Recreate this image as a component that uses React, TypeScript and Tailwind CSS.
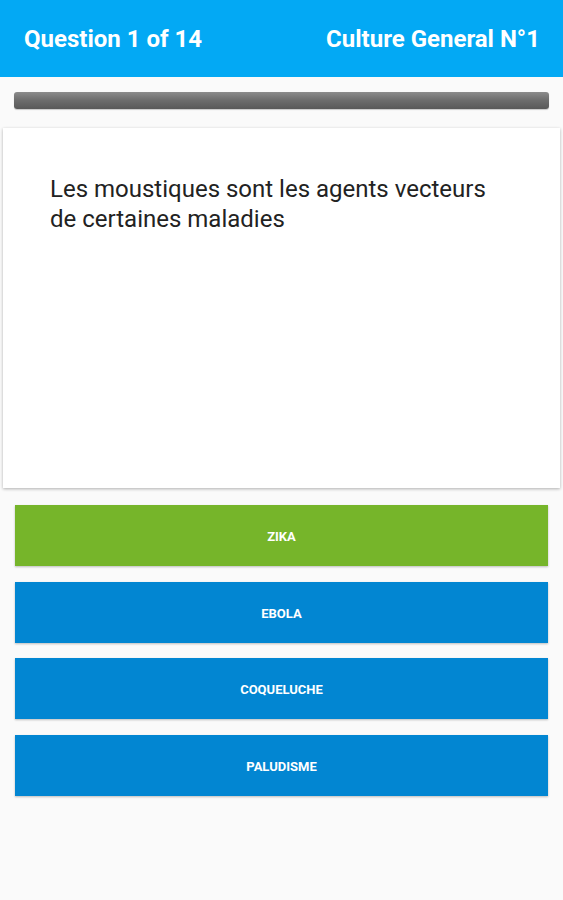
import React from 'react';

const answers = [
  { label: 'ZIKA', color: 'bg-[#76b52a]' },
  { label: 'EBOLA', color: 'bg-[#0286d2]' },
  { label: 'COQUELUCHE', color: 'bg-[#0286d2]' },
  { label: 'PALUDISME', color: 'bg-[#0286d2]' },
];

export default function App() {
  return (
    <div className="w-[563px] h-[900px] bg-[#fafafa] font-['Roboto',sans-serif] overflow-hidden">
      {/* Header */}
      <div className="h-[77px] bg-[#03a9f4] flex items-center justify-between pl-[24px] pr-[23px] text-white text-[24px] font-bold">
        <span>Question 1 of 14</span>
        <span>Culture General N°1</span>
      </div>

      {/* Progress */}
      <div className="px-[14px] pt-[15px]">
        <div className="h-[17px] rounded-[3px] bg-gradient-to-b from-[#8c8c8c] via-[#6c6c6c] to-[#595959] shadow-[0_1px_1px_rgba(0,0,0,0.2)]" />
      </div>

      {/* Question card */}
      <div className="mx-[3px] mt-[19px] h-[360px] bg-white shadow-[0_1px_3px_rgba(0,0,0,0.3)] pl-[47px] pr-[50px] pt-[46px]">
        <p className="text-[24px] leading-[30px] text-[#222222]">
          Les moustiques sont les agents vecteurs de certaines maladies
        </p>
      </div>

      {/* Answers */}
      <div className="px-[15px] mt-[17px] flex flex-col gap-[15.5px]">
        {answers.map(a => (
          <button
            key={a.label}
            className={`${a.color} h-[61px] w-full flex items-center justify-center pt-[3px] text-white text-[13px] font-bold shadow-[0_1px_2px_rgba(0,0,0,0.25)]`}
          >
            {a.label}
          </button>
        ))}
      </div>
    </div>
  );
}
